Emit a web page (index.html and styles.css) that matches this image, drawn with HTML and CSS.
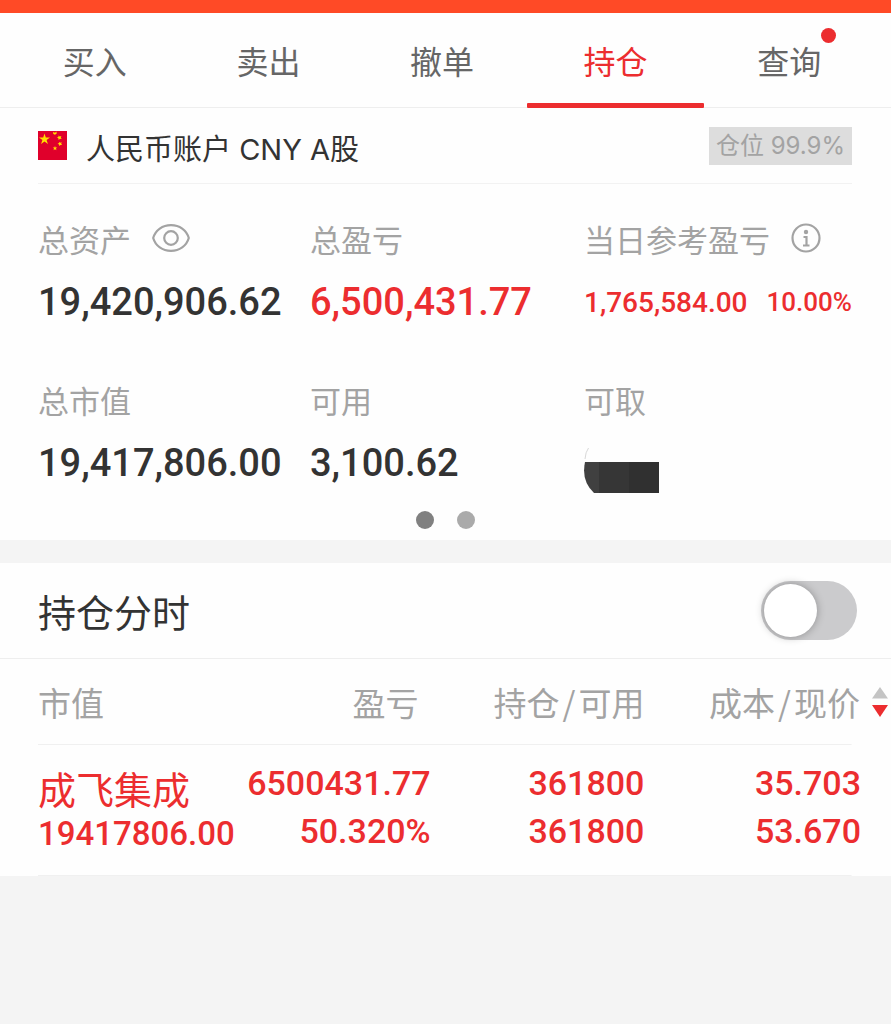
FILE: index.html
```html
<!DOCTYPE html>
<html lang="zh-CN">
<head>
<meta charset="utf-8">
<meta name="viewport" content="width=device-width, initial-scale=1">
<title>持仓</title>
<link rel="stylesheet" href="styles.css">
</head>
<body>
<header class="status-strip"></header>
<nav class="tabs">
  <a class="tab" href="#buy">买入</a>
  <a class="tab" href="#sell">卖出</a>
  <a class="tab" href="#cancel">撤单</a>
  <a class="tab tab-active" href="#position" aria-current="page">持仓</a>
  <a class="tab" href="#query"><span class="tab-text">查询<i class="tab-dot"></i></span></a>
</nav>
<main>
  <section class="card">
    <div class="account">
      <svg class="flag" viewBox="0 0 29 29" aria-hidden="true">
        <rect width="29" height="29" fill="#e0002b"/>
        <g fill="#ffde00">
          <path d="M6.500 2.500l1.300 4h4.200l-3.400 2.500 1.300 4-3.400-2.500-3.400 2.500 1.300-4L1 6.500h4.200z"/>
          <path d="M15 1l2 .8L18.500.5l.2 2-1.700 1.300-1.700-.8zM20.500 4.500l1.300 1 1.600-.6-.6 1.600.8 1.400-1.700-.1-1.200 1.100-.3-1.700-1.400-.8 1.500-.6zM21 11l1.300.7 1.300-.8-.4 1.600.9 1.200-1.600.2-1.100 1.200-.4-1.700-1.400-.7 1.400-.6zM17 15l.6 1.400 1.600.1-1.200 1.100.4 1.600-1.400-.9-1.400.9.4-1.600-1.200-1.100 1.600-.1z"/>
        </g>
      </svg>
      <h1 class="account-name">人民币账户 CNY A股</h1>
      <span class="badge">仓位 99.9%</span>
    </div>
    <dl class="stats">
      <div class="stat">
        <dt>总资产
          <button class="icon-button" type="button" aria-label="显示金额">
            <svg class="eye" viewBox="0 0 38 28" fill="none" stroke="#a3a3a3" stroke-width="2.200"><path d="M1.200 14C3.500 6 10.500 1.200 19 1.200S34.500 6 36.800 14C34.500 22 27.500 26.800 19 26.800S3.500 22 1.200 14z"/><circle cx="19" cy="14" r="6.800"/></svg>
          </button>
        </dt>
        <dd>19,420,906.62</dd>
      </div>
      <div class="stat">
        <dt>总盈亏</dt>
        <dd class="up">6,500,431.77</dd>
      </div>
      <div class="stat">
        <dt>当日参考盈亏
          <button class="icon-button" type="button" aria-label="说明">
            <svg class="info" viewBox="0 0 30 30" fill="none" stroke="#a3a3a3" stroke-width="2.200"><circle cx="15" cy="15" r="13.500"/><circle cx="15" cy="9" r="2.200" fill="#a3a3a3" stroke="none"/><path d="M12.500 14H15.500V22M12 22.500H18.500"/></svg>
          </button>
        </dt>
        <dd class="up day"><span>1,765,584.00</span><span class="rate">10.00%</span></dd>
      </div>
      <div class="stat">
        <dt>总市值</dt>
        <dd>19,417,806.00</dd>
      </div>
      <div class="stat">
        <dt>可用</dt>
        <dd>3,100.62</dd>
      </div>
      <div class="stat">
        <dt>可取</dt>
        <dd class="masked">
          <svg class="mask" viewBox="0 0 76 50" role="img" aria-label="已隐藏"><path d="M4.500 5Q1.500 9 1 16" fill="none" stroke="#d8d8d8"/><path d="M1 19H75V50H10Q-3 38 1 19z" fill="#404040"/><path d="M15 19H75V50H15z" fill="#363636"/><path d="M45 19H75V50H45z" fill="#303030"/></svg>
        </dd>
      </div>
    </dl>
    <div class="pager">
      <button class="page-dot page-dot-active" type="button" aria-label="第1页"></button>
      <button class="page-dot" type="button" aria-label="第2页"></button>
    </div>
  </section>
  <section class="card">
    <div class="switch-row">
      <label class="switch-label" for="timeline">持仓分时</label>
      <input class="switch" id="timeline" type="checkbox" role="switch">
    </div>
    <table class="positions">
      <colgroup><col class="col-value"><col class="col-profit"><col class="col-amount"><col class="col-price"></colgroup>
      <thead>
        <tr>
          <th scope="col">市值</th>
          <th scope="col" class="head-profit">盈亏</th>
          <th scope="col">持仓<span class="slash">/</span>可用</th>
          <th scope="col" class="head-price">
            <button class="sort" type="button"><span>成本<span class="slash">/</span>现价</span>
              <svg class="sort-icon" viewBox="0 0 16 30" aria-hidden="true"><path d="M8 0l8 11.500H0z" fill="#c4c4c4"/><path d="M0 18h16L8 30z" fill="#ec2d2f"/></svg>
            </button>
          </th>
        </tr>
      </thead>
      <tbody>
        <tr>
          <td><span class="stock">成飞集成</span><span class="market">19417806.00</span></td>
          <td><span class="line">6500431.77</span><span class="line">50.320%</span></td>
          <td><span class="line">361800</span><span class="line">361800</span></td>
          <td><span class="line">35.703</span><span class="line">53.670</span></td>
        </tr>
      </tbody>
    </table>
  </section>
</main>
</body>
</html>
```
FILE: styles.css
```css
* {
  box-sizing: border-box;
}

body {
  margin: 0;
  background: #f4f4f4;
  color: #333;
  font-family: "Noto Sans CJK SC", sans-serif;
}

button {
  padding: 0;
  border: 0;
  background: none;
  color: inherit;
  font: inherit;
}

svg {
  display: block;
}

.status-strip {
  height: 13px;
  background: #ff4a26;
}

.tabs {
  display: flex;
  padding: 0 15px 0 8px;
  border-bottom: 1px solid #eee;
  background: #fefefe;
}

.tab {
  position: relative;
  flex: 1;
  color: #666;
  font-size: 32px;
  line-height: 94px;
  text-align: center;
  text-decoration: none;
}

.tab-active {
  color: #ec2d2f;
}

.tab-active::after {
  position: absolute;
  right: -2px;
  bottom: -1px;
  left: -2px;
  height: 5px;
  border-radius: 1px;
  background: #ec2d2f;
  content: "";
}

.tab-text {
  position: relative;
}

.tab-dot {
  position: absolute;
  top: -9px;
  right: -15px;
  width: 15px;
  height: 15px;
  border-radius: 50%;
  background: #ec2d2f;
}

.card {
  margin-bottom: 23px;
  background: #fefefe;
}

.account {
  display: flex;
  align-items: center;
  height: 76px;
  margin: 0 39px 0 38px;
  border-bottom: 1px solid #f2f2f2;
}

.flag {
  width: 29px;
  height: 29px;
}

.account-name {
  flex: 1;
  margin: 0 0 0 19px;
  padding-top: 2px;
  font-family: Inter, "Noto Sans CJK SC", sans-serif;
  font-size: 29px;
  font-weight: 400;
}

.badge {
  padding: 0 7px;
  background: #ddd;
  color: #a3a3a3;
  font-family: Inter, "Noto Sans CJK SC", sans-serif;
  font-size: 24px;
  line-height: 38px;
}

.stats {
  display: grid;
  grid-template-columns: 272fr 274fr 268fr;
  row-gap: 55px;
  margin: 0;
  padding: 32px 39px 0 38px;
}

.stat dt {
  display: flex;
  align-items: center;
  gap: 21px;
  height: 44px;
  margin-bottom: 22px;
  color: #a3a3a3;
  font-size: 31px;
}

.stat dd {
  display: flex;
  align-items: center;
  height: 40px;
  margin: 0;
  font-family: Roboto, sans-serif;
  font-size: 38px;
  font-weight: 500;
}

.stat .up {
  color: #ec2d2f;
}

.stat .day {
  justify-content: space-between;
  font-size: 28px;
}

.rate {
  font-size: 26px;
}

.eye {
  width: 38px;
  height: 28px;
}

.info {
  width: 30px;
  height: 30px;
}

.stat .masked {
  align-items: flex-start;
}

.mask {
  width: 76px;
  height: 50px;
}

.pager {
  display: flex;
  justify-content: center;
  gap: 23px;
  padding: 28px 0 11px;
}

.page-dot {
  width: 18px;
  height: 18px;
  border-radius: 50%;
  background: #aaa;
}

.page-dot-active {
  background: #808080;
}

.switch-row {
  display: flex;
  align-items: center;
  justify-content: space-between;
  height: 96px;
  padding: 0 34px 0 38px;
  border-bottom: 1px solid #eee;
}

.switch-label {
  font-size: 38px;
  line-height: 48px;
}

.switch {
  width: 96px;
  height: 59px;
  margin: 0;
  padding: 3px;
  border-radius: 30px;
  appearance: none;
  background: #cbcbcd;
}

.switch::before {
  display: block;
  width: 53px;
  height: 53px;
  border-radius: 50%;
  background: #fff;
  box-shadow: 0 0 8px rgba(0, 0, 0, 0.3);
  content: "";
}

.switch:checked::before {
  margin-left: auto;
}

.positions {
  width: 100%;
  border-collapse: collapse;
  table-layout: fixed;
}

.col-value {
  width: 27%;
}

.col-profit {
  width: 22%;
}

.col-amount {
  width: 24%;
}

.positions thead,
.positions tbody {
  background: linear-gradient(#f0f0f0, #f0f0f0) 38px 100% / calc(100% - 77px) 1px no-repeat;
}

.positions th {
  height: 86px;
  padding: 0 6px 0 0;
  color: #a3a3a3;
  font-size: 33px;
  font-weight: 400;
  text-align: right;
  white-space: nowrap;
}

.positions th:first-child,
.positions td:first-child {
  padding-left: 38px;
  text-align: left;
}

.positions .head-profit {
  padding-right: 18px;
}

.positions .head-price {
  padding-right: 3px;
}

.slash {
  padding: 0 3px;
}

.sort {
  display: inline-flex;
  align-items: center;
  gap: 12px;
}

.sort-icon {
  width: 16px;
  height: 30px;
}

.positions td {
  height: 130px;
  padding: 14px 6px 20px 0;
  color: #ec2d2f;
  font-family: Roboto, sans-serif;
  font-size: 34px;
  font-weight: 500;
  line-height: 48px;
  text-align: right;
  vertical-align: top;
}

.positions td:last-child {
  padding-right: 30px;
}

.line,
.stock,
.market {
  display: block;
}

.stock {
  padding-top: 5px;
  font-family: "Noto Sans CJK SC", sans-serif;
  font-size: 38px;
  font-weight: 400;
  line-height: 48px;
}

.market {
  font-size: 33px;
  line-height: 44px;
}
```
